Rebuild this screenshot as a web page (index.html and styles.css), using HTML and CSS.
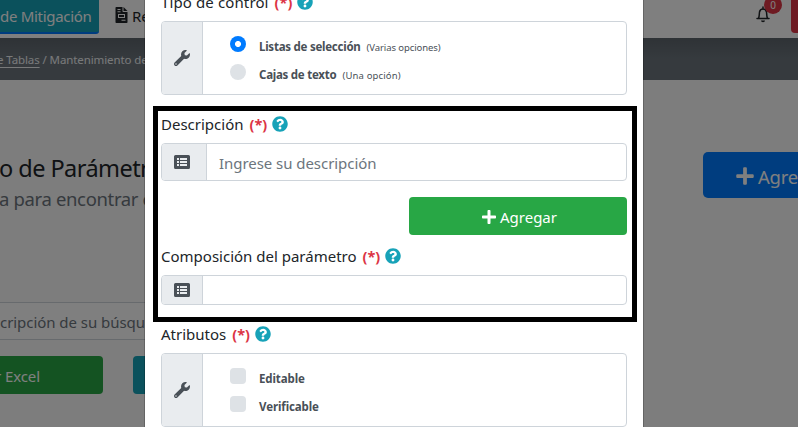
FILE: index.html
```html
<!DOCTYPE html>
<html lang="es">
<head>
<meta charset="utf-8">
<title>Mantenimiento de Parámetros</title>
<link rel="stylesheet" href="styles.css">
</head>
<body>
<svg class="defs" aria-hidden="true">
  <symbol id="help" viewBox="0 0 512 512"><path d="M504 256c0 136.997-111.043 248-248 248S8 392.997 8 256C8 119.083 119.043 8 256 8s248 111.083 248 248zM262.655 90c-54.497 0-89.255 22.957-116.549 63.758-3.536 5.286-2.353 12.415 2.715 16.258l34.699 26.31c5.205 3.947 12.621 3.008 16.665-2.122 17.864-22.658 30.113-35.797 57.303-35.797 20.429 0 45.698 13.148 45.698 32.958 0 14.976-12.363 22.667-32.534 33.976C247.128 238.528 216 254.941 216 296v4c0 6.627 5.373 12 12 12h56c6.627 0 12-5.373 12-12v-1.333c0-28.462 83.186-29.647 83.186-106.667 0-58.002-60.165-102-116.531-102zM256 338c-25.365 0-46 20.635-46 46 0 25.364 20.635 46 46 46s46-20.636 46-46c0-25.365-20.635-46-46-46z"/></symbol>
  <symbol id="wrench" viewBox="0 0 512 512"><path d="M507.73 109.1c-2.24-9.03-13.54-12.09-20.12-5.51l-74.36 74.36-67.88-11.31-11.31-67.88 74.36-74.36c6.62-6.62 3.43-17.9-5.66-20.16-47.38-11.74-99.55.91-136.58 37.93-39.64 39.64-50.55 97.1-34.05 147.2L18.74 402.76c-24.99 24.99-24.99 65.51 0 90.5 24.99 24.99 65.51 24.99 90.5 0l213.21-213.21c50.12 16.71 107.47 5.68 147.37-34.22 37.07-37.07 49.7-89.32 37.91-136.73zM64 472c-13.25 0-24-10.75-24-24 0-13.26 10.75-24 24-24s24 10.74 24 24c0 13.25-10.75 24-24 24z"/></symbol>
  <symbol id="plus" viewBox="0 0 448 512"><path d="M416 208H272V64c0-17.67-14.33-32-32-32h-32c-17.67 0-32 14.33-32 32v144H32c-17.67 0-32 14.33-32 32v32c0 17.67 14.33 32 32 32h144v144c0 17.67 14.33 32 32 32h32c17.67 0 32-14.33 32-32V304h144c17.67 0 32-14.33 32-32v-32c0-17.67-14.33-32-32-32z"/></symbol>
  <symbol id="list" viewBox="0 0 16 16"><path fill-rule="evenodd" d="M1.5 1h13A1.5 1.5 0 0 1 16 2.500v11a1.500 1.500 0 0 1-1.500 1.500h-13A1.500 1.500 0 0 1 0 13.500v-11A1.500 1.500 0 0 1 1.500 1zM3 4v2h2V4zm3 0v2h7V4zM3 7v2h2V7zm3 0v2h7V7zm-3 3v2h2v-2zm3 0v2h7v-2z"/></symbol>
  <symbol id="file" viewBox="0 0 12 16"><path fill-rule="evenodd" d="M0 .8Q0 0 .8 0H7v4.200q0 .8.8.8H12v10.200q0 .8-.8.8H.8q-.8 0-.8-.8zM8 0l4 4H8zM2 2v1h3V2zm0 2.200v1h3v-1zM2.500 7v4h7V7zm1 1h5v2h-5zM6 12.700v1h4v-1z"/></symbol>
  <symbol id="bell" viewBox="0 0 14 17"><path d="M1 12.500h12M2.600 12C3.400 10.500 3.200 8 3.500 6 3.900 3.800 5.200 3 7 3s3.100.8 3.500 3c.3 2 .1 4.500.9 6M7 3V1" fill="none" stroke="currentColor" stroke-width="1.500" stroke-linecap="round"/><path d="M5 14.500h4a2 1.800 0 0 1-4 0z"/></symbol>
</svg>

<div class="page">
  <nav class="nav">
    <a class="tab"><span class="t-tab">de Mitigación</span></a>
    <a class="nav-item"><svg class="i-file"><use href="#file"/></svg><span>Re</span></a>
    <div class="nav-end">
      <div class="bell"><svg class="i-bell"><use href="#bell"/></svg><span class="count">0</span></div>
      <div class="logout"></div>
    </div>
  </nav>
  <div class="crumbs"><a>e Tablas</a><span>&nbsp;/ Mantenimiento de</span></div>
  <main class="content">
    <header class="head">
      <div>
        <h1>o de Parámetr</h1>
        <p>a para encontrar c</p>
      </div>
      <button class="add"><svg class="i-plus-lg"><use href="#plus"/></svg><span>Agre</span></button>
    </header>
    <div class="search"><span>cripción de su búsqu</span></div>
    <div class="actions">
      <button class="excel"><span>r Excel</span></button>
      <button class="other"></button>
    </div>
  </main>
</div>
<div class="backdrop"></div>

<section class="modal">
  <div class="label"><span class="l-tipo">Tipo de control</span><b>(*)</b><svg class="i16 help"><use href="#help"/></svg></div>
  <div class="group tall">
    <div class="addon"><svg class="i16"><use href="#wrench"/></svg></div>
    <div class="options">
      <div class="option"><i class="radio on"></i><strong class="tight">Listas de selección</strong><small>(Varias opciones)</small></div>
      <div class="option"><i class="radio"></i><strong class="tight">Cajas de texto</strong><small class="loose">(Una opción)</small></div>
    </div>
  </div>

  <div class="label spaced"><span>Descripción</span><b>(*)</b><svg class="i16 help"><use href="#help"/></svg></div>
  <div class="group medium">
    <div class="addon wide"><svg class="i16"><use href="#list"/></svg></div>
    <div class="placeholder"><span>Ingrese su descripción</span></div>
  </div>
  <button class="agregar"><svg class="i-plus"><use href="#plus"/></svg><span>Agregar</span></button>

  <div class="label after-button"><span>Composición del parámetro</span><b>(*)</b><svg class="i16 help"><use href="#help"/></svg></div>
  <div class="group short">
    <div class="addon"><svg class="i16"><use href="#list"/></svg></div>
  </div>

  <div class="label spaced"><span>Atributos</span><b>(*)</b><svg class="i16 help"><use href="#help"/></svg></div>
  <div class="group tall">
    <div class="addon"><svg class="i16"><use href="#wrench"/></svg></div>
    <div class="options">
      <div class="option"><i class="check"></i><strong>Editable</strong></div>
      <div class="option"><i class="check"></i><strong>Verificable</strong></div>
    </div>
  </div>
  <div class="highlight"></div>
</section>
</body>
</html>
```

FILE: styles.css
```css
* { box-sizing: border-box; }
body {
  margin: 0;
  width: 798px;
  height: 427px;
  overflow: hidden;
  position: relative;
  font: 15px/24px "Noto Sans", "Open Sans", sans-serif;
  color: #212529;
}
svg { display: block; fill: currentColor; flex: none; }
span, strong, small, b, h1, p { white-space: nowrap; }
button { border: 0; padding: 0; font: inherit; color: #fff; display: flex; align-items: center; }
.defs { position: absolute; width: 0; height: 0; }
.i16 { width: 16px; height: 16px; }
.help { color: #17a2b8; }

.page { width: 798px; height: 427px; background: #fafafa; overflow: hidden; }
.nav { height: 38px; display: flex; background: #fff; }
.tab {
  width: 99px; height: 34px; padding-top: 4px;
  background: #17a2b8; color: #fff;
  border-bottom: 2px solid #007bff; border-radius: 0 0 3px 0;
}
.t-tab { letter-spacing: -.3px; }
.nav-item { display: flex; gap: 4px; padding: 3px 0 0 16px; }
.nav-item span { padding-top: 1px; }
.i-file { width: 13px; height: 16px; margin-top: 4px; }
.nav-end { margin-left: auto; display: flex; }
.bell { position: relative; width: 35px; padding-top: 6px; }
.i-bell { width: 14px; height: 17px; }
.count {
  position: absolute; left: 8px; top: -4px; width: 18px; height: 18px;
  border-radius: 50%; background: #dc3545; color: #fff;
  font-size: 10px; line-height: 18px; text-align: center;
}
.logout { width: 7px; height: 33px; background: #dc3545; border-radius: 0 0 0 4px; }

.crumbs {
  height: 42px; padding-top: 11px; color: #f1f3f5;
  background: linear-gradient(#5d656c, #6c757d 50%);
  font-size: 11.5px; line-height: 22px; letter-spacing: -.1px; display: flex;
}
.crumbs a { margin-left: -3px; text-decoration: underline; text-underline-offset: 3px; white-space: nowrap; }

.head { display: flex; justify-content: space-between; padding-top: 72px; height: 222px; }
h1 { margin: 0 0 0 -1px; font-size: 23.5px; line-height: 32px; font-weight: 400; letter-spacing: -.55px; }
p { margin: 0 0 0 -1px; font-size: 18.5px; line-height: 30px; letter-spacing: -.35px; color: #6c757d; }
.add { width: 95px; height: 46px; background: #007bff; border-radius: 5px 0 0 5px; padding-left: 33px; gap: 4px; font-size: 18.5px; letter-spacing: -.2px; }
.add span { padding-top: 3px; }
.i-plus-lg { width: 18px; height: 20px; position: relative; top: 1px; }
.search { width: 500px; height: 38px; border: 1px solid #ced4da; border-left: 0; background: #fff; color: #6c757d; padding-top: 7px; }
.search span { letter-spacing: -.05px; }
.actions { display: flex; gap: 30px; margin-top: 16px; }
.excel { width: 103px; height: 38px; background: #28a745; border-radius: 0 4px 4px 0; }
.excel span { margin: 2px 0 0 -5px; letter-spacing: -.1px; }
.other { width: 60px; height: 38px; background: #17a2b8; border-radius: 4px; }
.backdrop { position: absolute; inset: 0; background: rgba(0, 0, 0, .5); }

.modal {
  position: absolute; left: 144px; top: -9px; width: 500px; height: 440px;
  padding: 0 16px; background: #fff; background-clip: padding-box;
  border: solid rgba(0, 0, 0, .2); border-width: 0 1px;
}
.label { height: 24px; margin-bottom: 6px; display: flex; align-items: flex-start; }
.label .help { margin-top: 3px; }
.l-tipo { letter-spacing: .12px; position: relative; top: -1px; }
.label b { color: #dc3545; margin: 0 5px 0 6px; font-size: 14.5px; position: relative; top: -1px; }
.spaced { margin-top: 18px; }
.spaced span, .after-button span { position: relative; top: -1px; }
.after-button { margin-top: 10px; }
.group { display: flex; border: 1px solid #ced4da; border-radius: 4px; overflow: hidden; }
.tall { height: 74px; }
.medium { height: 38px; }
.short { height: 30px; }
.addon { width: 41px; background: #e9ecef; border-right: 1px solid #ced4da; color: #495057; display: flex; align-items: center; padding-left: 12px; }
.addon.wide { width: 45px; }
.placeholder { color: #6c757d; padding: 7px 0 0 12px; letter-spacing: -.05px; }
.options { padding: 8px 0 0 27px; }
.option { display: flex; height: 28px; color: #495057; line-height: 24px; }
.option strong { margin: 5px 0 0 13px; font-size: 11.5px; letter-spacing: -.1px; }
.option .tight { letter-spacing: -.25px; }
.option small { margin: 6px 0 0 6px; font-size: 9.5px; letter-spacing: -.08px; }
.option .loose { letter-spacing: .15px; }
.radio, .check { width: 16px; height: 16px; margin-top: 6px; background: #dee2e6; flex: none; }
.radio { border-radius: 50%; }
.radio.on { background: radial-gradient(circle, #fff 2.6px, #007bff 3.4px); }
.check { border-radius: 4px; }
.agregar { width: 218px; height: 38px; margin: 16px 0 0 auto; background: #28a745; border-radius: 4px; justify-content: center; gap: 4px; padding-left: 3px; }
.agregar span { padding-top: 2px; }
.i-plus { width: 14px; height: 16px; position: relative; top: 1px; }
.highlight { position: absolute; left: 8px; top: 115px; width: 484px; height: 216px; border: 5px solid #000; }
```
